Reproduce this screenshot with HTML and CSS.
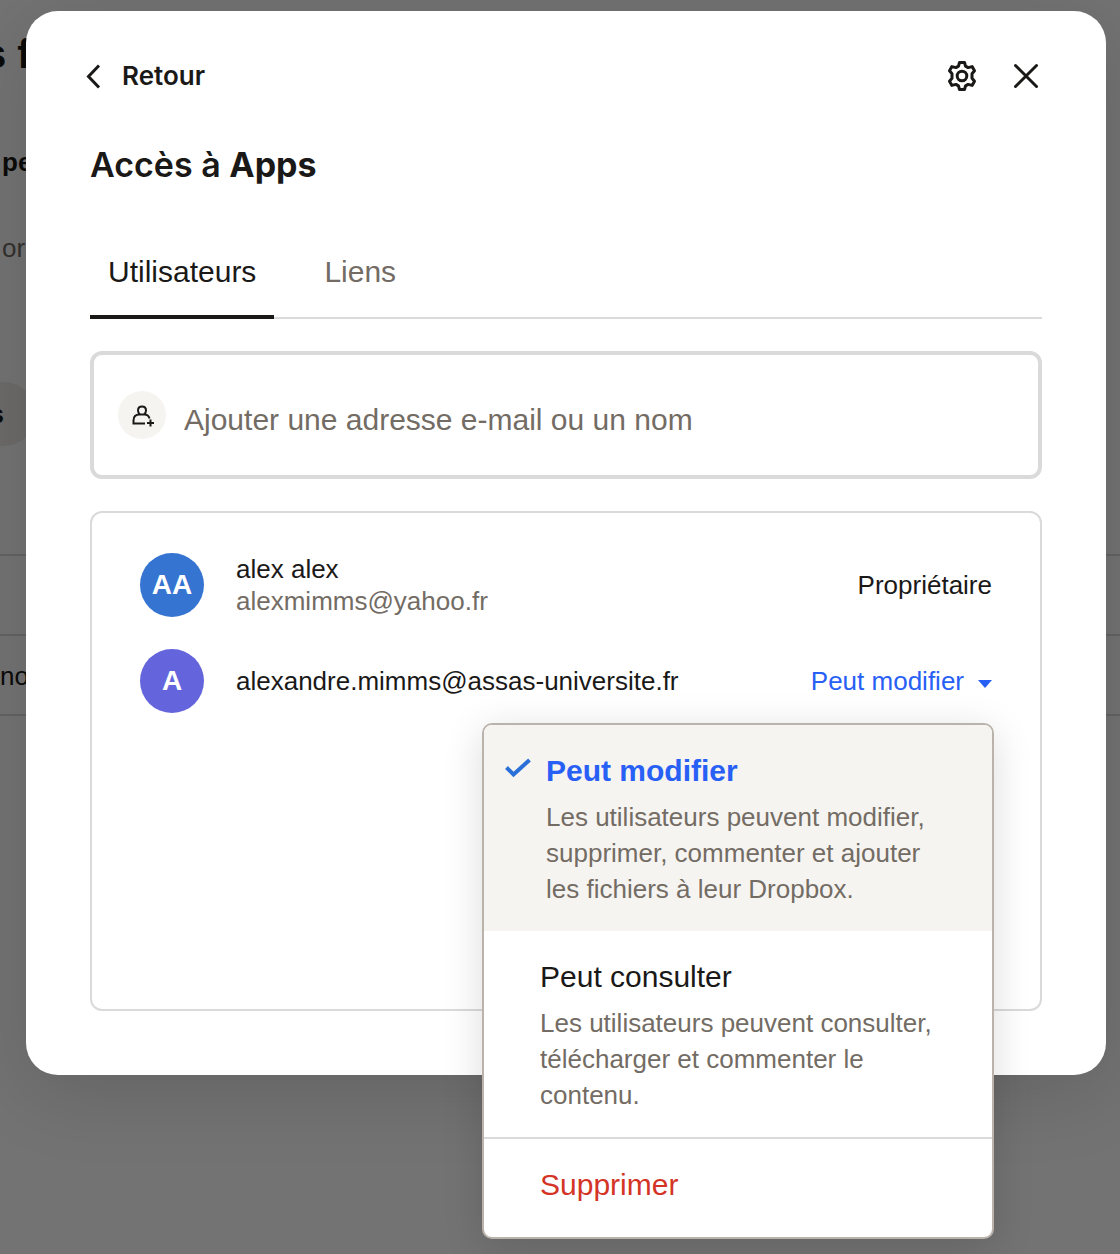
FILE: index.html
```html
<!DOCTYPE html>
<html lang="fr">
<head>
<meta charset="utf-8">
<meta name="viewport" content="width=device-width, initial-scale=1">
<title>Accès à Apps</title>
<link rel="stylesheet" href="styles.css">
</head>
<body>
<div class="page" aria-hidden="true">
  <div class="page-title">s f</div>
  <div class="page-subtitle">pe</div>
  <div class="page-note">or</div>
  <div class="page-pill">s</div>
  <div class="page-rows">
    <div class="page-row"></div>
    <div class="page-row">no</div>
  </div>
</div>

<div class="scrim">
  <section class="modal" role="dialog" aria-modal="true" aria-labelledby="modal-title">
    <header class="modal-header">
      <button class="back" type="button">
        <svg width="16" height="26" viewBox="0 0 16 26" fill="none" stroke="currentColor" stroke-width="3" aria-hidden="true"><path d="M13 2.500 2.500 13.500 13 24.500"/></svg>
        Retour
      </button>
      <div class="modal-actions">
        <button class="icon-button" type="button" aria-label="Paramètres">
          <svg width="32" height="32" viewBox="0 0 32 32" fill="none" stroke="currentColor" stroke-width="3" aria-hidden="true">
            <path d="M13.500 2.500h5l1 3.600 2.600 1.500 4-1 2.400 4.200-2.500 3v4.400l2.500 3-2.400 4.200-4-1-2.600 1.500-1 3.600h-5l-1-3.600-2.600-1.500-4 1-2.400-4.200 2.500-3v-4.400l-2.500-3 2.400-4.200 4 1 2.600-1.500z" stroke-linejoin="round"/>
            <circle cx="16" cy="16" r="4.800"/>
          </svg>
        </button>
        <button class="icon-button" type="button" aria-label="Fermer">
          <svg width="32" height="32" viewBox="0 0 32 32" fill="none" stroke="currentColor" stroke-width="3" stroke-linecap="round" aria-hidden="true"><path d="m5.500 5.500 21 21m0-21-21 21"/></svg>
        </button>
      </div>
    </header>

    <h1 class="modal-title" id="modal-title">Accès à <strong>Apps</strong></h1>

    <div class="tabs" role="tablist">
      <button class="tab tab-active" type="button" role="tab" aria-selected="true">Utilisateurs</button>
      <button class="tab" type="button" role="tab" aria-selected="false">Liens</button>
    </div>

    <label class="invite">
      <span class="invite-icon">
        <svg width="24" height="24" viewBox="0 0 24 24" fill="none" stroke="currentColor" stroke-width="2" aria-hidden="true">
          <path d="M10 11.500C8.700 10.500 8 9.200 8 7.500 8 5 9.300 3.500 12 3.500s4 1.500 4 4c0 1.700-.700 3-2 4M19.500 15.500c-.700-2.700-2.500-4-5-4h-5c-4 0-6 2.200-6 6V20.500H15M20.500 16.500v7M17 20h7"/>
        </svg>
      </span>
      <input class="invite-input" type="text" placeholder="Ajouter une adresse e-mail ou un nom" aria-label="Ajouter une adresse e-mail ou un nom">
    </label>

    <ul class="members">
      <li class="member">
        <span class="avatar avatar-blue">AA</span>
        <div class="member-info">
          <div>alex alex</div>
          <div class="muted">alexmimms@yahoo.fr</div>
        </div>
        <span>Propriétaire</span>
      </li>
      <li class="member">
        <span class="avatar avatar-violet">A</span>
        <div class="member-info">alexandre.mimms@assas-universite.fr</div>
        <div class="role">
          <button class="role-button" type="button" aria-haspopup="menu" aria-expanded="true">
            Peut modifier
            <svg class="caret" width="14" height="8" viewBox="0 0 14 8" fill="currentColor" aria-hidden="true"><path d="M0 0h14L7 8z"/></svg>
          </button>
          <div class="menu" role="menu">
            <button class="option option-selected" type="button" role="menuitemradio" aria-checked="true">
              <svg class="option-check" width="28" height="24" viewBox="0 0 28 24" fill="none" stroke="currentColor" stroke-width="4" aria-hidden="true"><path d="m2.500 10.500 7 7L25.500 3"/></svg>
              <span class="option-text">
                <span class="option-title">Peut modifier</span>
                <span class="option-desc">Les utilisateurs peuvent modifier, supprimer, commenter et ajouter les fichiers à leur Dropbox.</span>
              </span>
            </button>
            <button class="option" type="button" role="menuitemradio" aria-checked="false">
              <span class="option-text">
                <span class="option-title">Peut consulter</span>
                <span class="option-desc">Les utilisateurs peuvent consulter, télécharger et commenter le contenu.</span>
              </span>
            </button>
            <button class="option option-danger" type="button" role="menuitem">
              <span class="option-title">Supprimer</span>
            </button>
          </div>
        </div>
      </li>
    </ul>
  </section>
</div>
</body>
</html>
```
FILE: styles.css
```css
* {
  box-sizing: border-box;
}

body {
  margin: 0;
  position: relative;
  min-height: 100vh;
  background: #fff;
  color: #1a1918;
  font: 26px/32px "Liberation Sans", Arial, sans-serif;
}

button {
  margin: 0;
  padding: 0;
  border: 0;
  background: none;
  color: inherit;
  font: inherit;
  text-align: left;
  cursor: pointer;
}

svg {
  display: block;
  flex: none;
}

/* Page behind the dialog */
.page {
  min-height: 100vh;
  padding-top: 30px;
  overflow: hidden;
}

.page-title {
  margin-left: -16px;
  font-size: 40px;
  line-height: 48px;
  font-weight: 700;
}

.page-subtitle {
  margin: 68px 0 0 2px;
  font-weight: 700;
}

.page-note {
  margin: 54px 0 0 2px;
  color: #736c64;
}

.page-pill {
  width: 36px;
  height: 64px;
  margin-top: 118px;
  padding-right: 32px;
  border-radius: 0 32px 32px 0;
  background: #f0eee9;
  font-weight: 700;
  line-height: 64px;
  direction: rtl;
}

.page-rows {
  margin-top: 108px;
  border-top: 2px solid #dcdcdc;
}

.page-row {
  height: 80px;
  border-bottom: 2px solid #dcdcdc;
  line-height: 80px;
}

/* Dialog */
.scrim {
  position: absolute;
  inset: 0;
  padding: 11px 14px 15px 26px;
  background: rgba(0, 0, 0, 0.55);
}

.modal {
  padding: 40px 64px 64px;
  border-radius: 32px;
  background: #fff;
  box-shadow: 0 16px 80px rgba(0, 0, 0, 0.14);
}

.modal-header {
  display: flex;
  align-items: center;
  justify-content: space-between;
  height: 50px;
}

.back {
  display: flex;
  align-items: center;
  gap: 20px;
  margin-left: -4px;
  font-family: Inter, "Liberation Sans", sans-serif;
  font-weight: 600;
}

.modal-actions {
  display: flex;
  gap: 32px;
}

.modal-title {
  margin: 40px 0 64px;
  font: 600 34px/48px Inter, "Liberation Sans", sans-serif;
}

.modal-title strong {
  font-weight: 700;
}

.tabs {
  display: flex;
  gap: 32px;
  box-shadow: inset 0 -2px #dadada;
}

.tab {
  padding: 0 18px 24px;
  border-bottom: 4px solid transparent;
  color: #736c64;
  font-size: 30px;
  line-height: 38px;
}

.tab-active {
  border-color: #1a1918;
  color: #1a1918;
}

.invite {
  display: flex;
  align-items: center;
  gap: 18px;
  height: 128px;
  margin-top: 32px;
  padding: 0 24px;
  border: 4px solid #dadada;
  border-radius: 12px;
}

.invite-icon {
  display: grid;
  flex: none;
  place-items: center;
  width: 48px;
  height: 48px;
  border-radius: 50%;
  background: #f6f4f1;
}

.invite-input {
  flex: 1;
  min-width: 0;
  padding: 10px 0 0;
  border: 0;
  outline: 0;
  background: none;
  color: inherit;
  font: inherit;
  font-size: 30px;
  line-height: 38px;
}

.invite-input::placeholder {
  color: #736c64;
  opacity: 1;
}

.members {
  display: flex;
  flex-direction: column;
  gap: 32px;
  min-height: 500px;
  margin: 32px 0 0;
  padding: 40px 48px;
  border: 2px solid #dadada;
  border-radius: 12px;
  list-style: none;
}

.member {
  display: flex;
  align-items: center;
  gap: 32px;
}

.member-info {
  flex: 1;
  min-width: 0;
}

.muted {
  color: #736c64;
}

.avatar {
  display: grid;
  flex: none;
  place-items: center;
  width: 64px;
  height: 64px;
  border-radius: 50%;
  color: #fff;
  font-size: 28px;
  font-weight: 700;
}

.avatar-blue {
  background: #3574d1;
}

.avatar-violet {
  background: #6465dd;
}

/* Role menu */
.role {
  position: relative;
}

.role-button {
  display: flex;
  align-items: center;
  gap: 14px;
  height: 64px;
  color: #2860f6;
}

.caret {
  margin-top: 6px;
}

.menu {
  position: absolute;
  top: calc(100% + 10px);
  right: -2px;
  width: 512px;
  padding-bottom: 8px;
  overflow: hidden;
  border: 2px solid #b9b3ab;
  border-radius: 10px;
  background: #fff;
  box-shadow: 0 8px 40px rgba(0, 0, 0, 0.14);
}

.option {
  display: flex;
  gap: 14px;
  width: 100%;
  padding: 24px 56px;
}

.option-selected {
  padding-left: 20px;
  background: #f6f4f1;
}

.option-check {
  margin-top: 8px;
  color: #2b70d8;
}

.option-text {
  display: flex;
  flex-direction: column;
  gap: 6px;
}

.option-title {
  font-size: 30px;
  line-height: 44px;
}

.option-selected .option-title {
  color: #2860f6;
  font-weight: 700;
}

.option-desc {
  color: #736c64;
  line-height: 36px;
}

.option-danger {
  padding-bottom: 22px;
  border-top: 2px solid #dadada;
  color: #d33426;
}
```
